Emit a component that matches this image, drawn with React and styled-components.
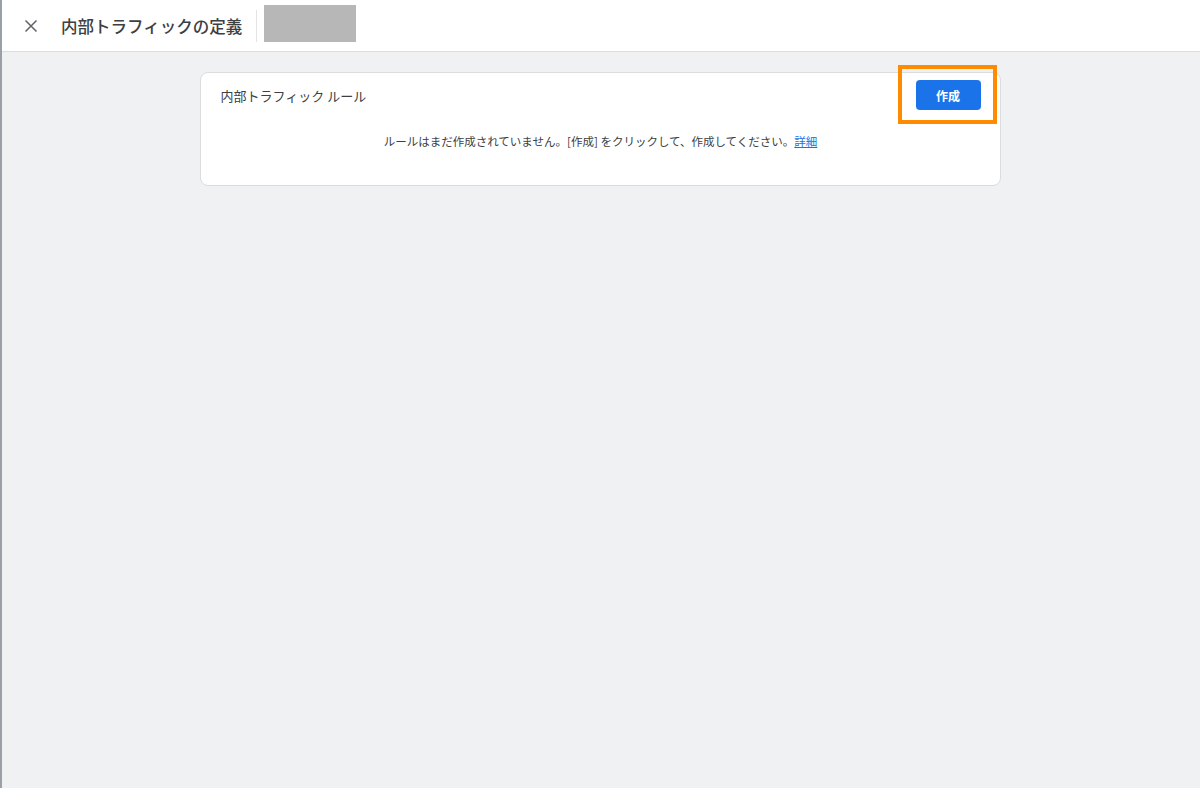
import styled, { createGlobalStyle } from 'styled-components';

const GlobalStyle = createGlobalStyle`
  html, body {
    margin: 0;
    padding: 0;
    height: 100%;
  }
  body {
    font-family: "Noto Sans CJK JP", "Noto Sans", sans-serif;
    color: #202124;
    background: #eff1f3;
  }
  #root {
    height: 100%;
  }
`;

const Page = styled.div`
  height: 788px;
  display: flex;
  flex-direction: column;
  border-left: 2px solid #9aa0a6;
  box-sizing: border-box;
  overflow: hidden;
`;

const Header = styled.header`
  height: 52px;
  flex: none;
  display: flex;
  align-items: center;
  background: #fff;
  border-bottom: 1px solid #dadce0;
  box-sizing: border-box;
  padding-left: 18px;
`;

const CloseButton = styled.button`
  width: 22px;
  height: 22px;
  padding: 0;
  border: none;
  background: none;
  display: flex;
  align-items: center;
  justify-content: center;
  color: #5f6368;
  cursor: pointer;
`;

const Title = styled.h1`
  margin: 0 0 0 19px;
  font-size: 16.5px;
  font-weight: 500;
  color: #3c4043;
`;

const Divider = styled.span`
  width: 1px;
  height: 32px;
  background: #e3e3e3;
  margin: 0 7px 0 14px;
`;

const Redacted = styled.div`
  width: 92px;
  height: 37px;
  background: #b7b7b7;
  margin-top: -5px;
`;

const Body = styled.main`
  flex: 1;
  display: flex;
  justify-content: center;
  padding-top: 20px;
  padding-right: 2px;
`;

const Card = styled.section`
  width: 801px;
  height: 114px;
  box-sizing: border-box;
  background: #fff;
  border: 1px solid #dadce0;
  border-radius: 8px;
  padding: 7px 19px 0 20px;
  display: flex;
  flex-direction: column;
`;

const CardHead = styled.div`
  height: 30px;
  display: flex;
  justify-content: space-between;
  align-items: center;
`;

const CardTitle = styled.h2`
  margin: 0;
  font-size: 13px;
  font-weight: 400;
  color: #3c4043;
`;

const ButtonWrap = styled.div`
  position: relative;
`;

const Highlight = styled.span`
  position: absolute;
  left: -18px;
  top: -15px;
  right: -16px;
  bottom: -14px;
  border: 4px solid #ff8c00;
  pointer-events: none;
`;

const PrimaryButton = styled.button`
  display: block;
  width: 65px;
  height: 30px;
  border: none;
  border-radius: 4px;
  background: #1a73e8;
  color: #fff;
  font-family: inherit;
  font-size: 12px;
  font-weight: 700;
  cursor: pointer;
`;

const Message = styled.p`
  margin: 22px 0 0 0;
  line-height: 18px;
  text-align: center;
  font-size: 11.5px;
  color: #3c4043;
`;

const Link = styled.a`
  color: #1a73e8;
  text-decoration: underline;
`;

const App = () => {
  return (
    <>
      <GlobalStyle />
      <Page>
        <Header>
          <CloseButton aria-label='close'>
            <svg width='14' height='14' viewBox='0 0 14 14'>
              <path d='M1.5 1.5 L12.5 12.5 M12.5 1.5 L1.5 12.5' stroke='currentColor' strokeWidth='1.5' />
            </svg>
          </CloseButton>
          <Title>内部トラフィックの定義</Title>
          <Divider />
          <Redacted />
        </Header>
        <Body>
          <Card>
            <CardHead>
              <CardTitle>内部トラフィック ルール</CardTitle>
              <ButtonWrap>
                <PrimaryButton>作成</PrimaryButton>
                <Highlight />
              </ButtonWrap>
            </CardHead>
            <Message>
              ルールはまだ作成されていません。[作成] をクリックして、作成してください。
              <Link href='#'>詳細</Link>
            </Message>
          </Card>
        </Body>
      </Page>
    </>
  );
};

export default App;
